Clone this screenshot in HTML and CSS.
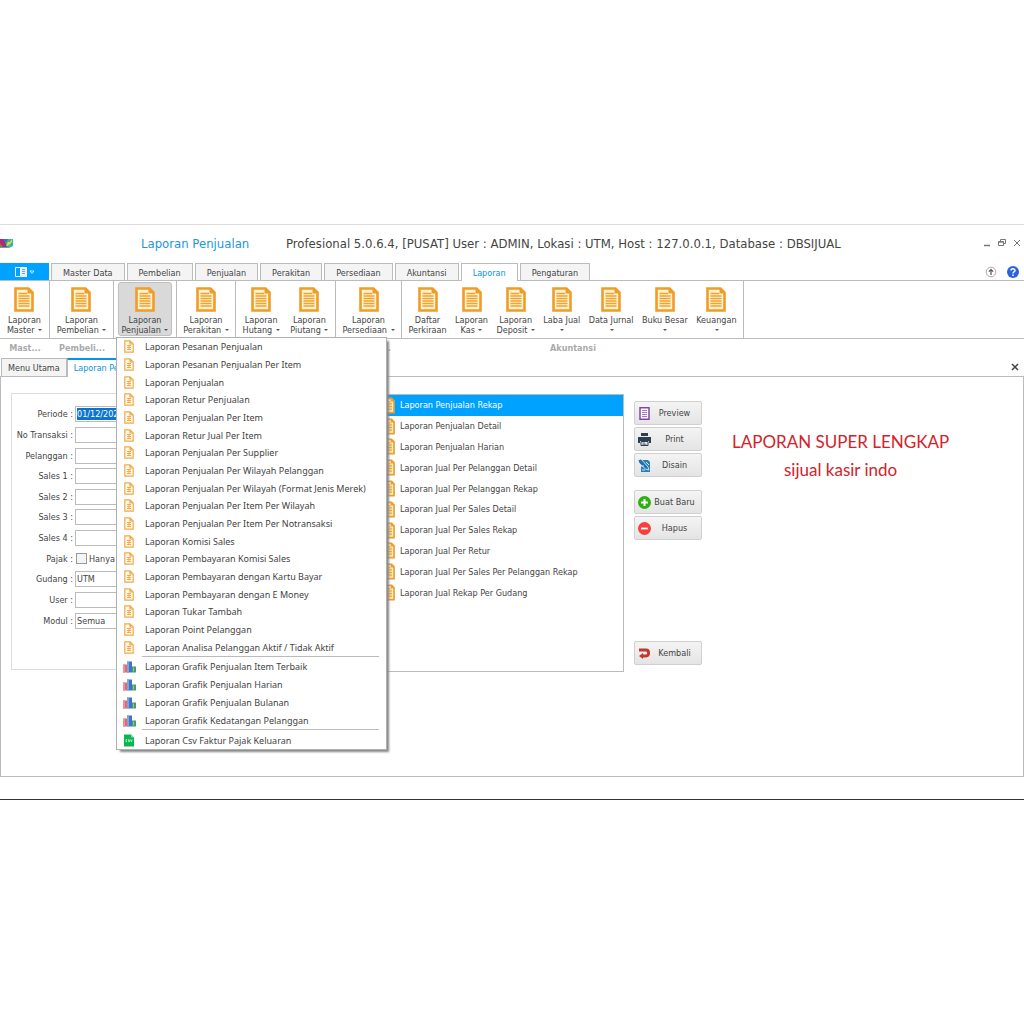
FILE: index.html
```html
<!DOCTYPE html>
<html lang="id">
<head>
  <meta charset="utf-8">
  <title>Laporan Penjualan</title>
  <link rel="stylesheet" href="styles.css">
</head>
<body>
  <!-- shared icons -->
  <svg class="sprite" aria-hidden="true">
    <symbol id="report" viewBox="0 0 20 25">
      <path d="M1.500 1.500H14.500L18.500 5.500V23.500H1.500Z" fill="#fff3d0" stroke="#f09c28" stroke-width="2.600"/>
      <path d="M13.500 1V6.500H19Z" fill="#f09c28"/>
      <path d="M4.500 6.500H13M4.500 9H15.500M4.500 11.500H15.500M4.500 14H15.500M4.500 16.500H15.500M4.500 19H15.500" stroke="#f4a22f" stroke-width="1.500"/>
    </symbol>
    <symbol id="page" viewBox="0 0 10 13">
      <path d="M.8 .8H6L9.200 4V12.200H.8Z M6 1V4H9" fill="#fffaf0" stroke="#f3a947" stroke-width="1.200"/>
      <path d="M3 5.500H7M3 7.500H7M3 9.500H7M5 5V10" stroke="#f3a947"/>
    </symbol>
    <symbol id="chart" viewBox="0 0 13 12">
      <path d="M0 4H4V12H0Z" fill="#e26a6c"/>
      <path d="M0 4H2V12H0Z" fill="#f09090"/>
      <path d="M4 1H9V12H4Z" fill="#3f74c6"/>
      <path d="M4 1H6V12H4Z" fill="#7ba6e6"/>
      <path d="M9 6H13V12H9Z" fill="#4c9a6c"/>
      <path d="M10 7H11V11H10Z" fill="#8cc8a0"/>
    </symbol>
  </svg>

  <div class="window">
    <header class="titlebar">
      <svg class="app-logo" viewBox="0 0 13 11"><path d="M0 1H13V8L9 10H0Z" fill="#3bb4a0"/><path d="M0 1H4L7 9H0Z" fill="#a0307c"/><path d="M4 1L6 5L8 1Z" fill="#3d6cc0"/><path d="M6 8L8 4H10L12 1V4L9 7Z" fill="#e4dc3c"/><path d="M0 5L3 9H0Z" fill="#e05540"/></svg>
      <span class="tool-title">Laporan Penjualan</span>
      <h1>Profesional 5.0.6.4, [PUSAT] User : ADMIN, Lokasi : UTM, Host : 127.0.0.1, Database : DBSIJUAL</h1>
      <div class="win-buttons">
        <button aria-label="Minimize"><svg viewBox="0 0 8 8"><path d="M1 6.500H7" stroke="#777" stroke-width="1.500"/></svg></button>
        <button aria-label="Restore"><svg viewBox="0 0 8 8"><path d="M2.500 2.500V.5H7.500V4.500H5.500M.5 2.500H5.500V6.500H.5Z M.5 3.200H5.500" fill="none" stroke="#777"/></svg></button>
        <button aria-label="Close"><svg viewBox="0 0 8 8"><path d="M1 1L7 7M7 1L1 7" stroke="#777"/></svg></button>
      </div>
    </header>

    <nav class="tabs">
      <button class="app-menu" aria-label="Menu">
        <svg viewBox="0 0 20 10"><path d="M.5 .5H5.500V9.500H.5Z" fill="none" stroke="#fff"/><path d="M6 0H12V10H6Z" fill="#eee"/><path d="M7 2.500H10M7 4.500H10M7 6.500H10" stroke="#69a9cc"/><path d="M15 4H19L17 6.500Z" fill="#0090e0" stroke="#fff" stroke-width=".8"/></svg>
      </button>
      <a href="#">Master Data</a>
      <a href="#">Pembelian</a>
      <a href="#">Penjualan</a>
      <a href="#">Perakitan</a>
      <a href="#">Persediaan</a>
      <a href="#">Akuntansi</a>
      <a href="#" class="active">Laporan</a>
      <a href="#">Pengaturan</a>
      <div class="tab-tools">
        <button aria-label="Collapse"><svg viewBox="0 0 12 12"><circle cx="6" cy="6" r="4.800" fill="#fff" stroke="#aaa"/><path d="M6 9V3.500M3.800 5.700L6 3.500L8.200 5.700" fill="none" stroke="#555" stroke-width="1.200"/></svg></button>
        <button aria-label="Help"><svg viewBox="0 0 12 12"><circle cx="6" cy="6" r="6" fill="#2a62dc"/><path d="M4 4.600C4 2.300 8 2.300 8 4.500C8 6 6 5.800 6 7.400M6 8.500V10" fill="none" stroke="#fff" stroke-width="1.500"/></svg></button>
      </div>
    </nav>

    <div class="ribbon">
      <section class="group g-master">
        <div class="tools"><button><svg><use href="#report"/></svg>Laporan<br>Master <i></i></button></div>
        <h2>Mast...</h2>
      </section>
      <section class="group g-beli">
        <div class="tools"><button><svg><use href="#report"/></svg>Laporan<br>Pembelian <i></i></button></div>
        <h2>Pembeli...</h2>
      </section>
      <section class="group g-jual">
        <div class="tools"><button class="open"><svg><use href="#report"/></svg>Laporan<br>Penjualan <i></i></button></div>
        <div class="menu">
          <ul class="reports">
            <li><a href="#"><svg><use href="#page"/></svg>Laporan Pesanan Penjualan</a></li>
            <li><a href="#"><svg><use href="#page"/></svg>Laporan Pesanan Penjualan Per Item</a></li>
            <li><a href="#"><svg><use href="#page"/></svg>Laporan Penjualan</a></li>
            <li><a href="#"><svg><use href="#page"/></svg>Laporan Retur Penjualan</a></li>
            <li><a href="#"><svg><use href="#page"/></svg>Laporan Penjualan Per Item</a></li>
            <li><a href="#"><svg><use href="#page"/></svg>Laporan Retur Jual Per Item</a></li>
            <li><a href="#"><svg><use href="#page"/></svg>Laporan Penjualan Per Supplier</a></li>
            <li><a href="#"><svg><use href="#page"/></svg>Laporan Penjualan Per Wilayah Pelanggan</a></li>
            <li><a href="#"><svg><use href="#page"/></svg>Laporan Penjualan Per Wilayah (Format Jenis Merek)</a></li>
            <li><a href="#"><svg><use href="#page"/></svg>Laporan Penjualan Per Item Per Wilayah</a></li>
            <li><a href="#"><svg><use href="#page"/></svg>Laporan Penjualan Per Item Per Notransaksi</a></li>
            <li><a href="#"><svg><use href="#page"/></svg>Laporan Komisi Sales</a></li>
            <li><a href="#"><svg><use href="#page"/></svg>Laporan Pembayaran Komisi Sales</a></li>
            <li><a href="#"><svg><use href="#page"/></svg>Laporan Pembayaran dengan Kartu Bayar</a></li>
            <li><a href="#"><svg><use href="#page"/></svg>Laporan Pembayaran dengan E Money</a></li>
            <li><a href="#"><svg><use href="#page"/></svg>Laporan Tukar Tambah</a></li>
            <li><a href="#"><svg><use href="#page"/></svg>Laporan Point Pelanggan</a></li>
            <li><a href="#"><svg><use href="#page"/></svg>Laporan Analisa Pelanggan Aktif / Tidak Aktif</a></li>
          </ul>
          <hr>
          <ul class="charts">
            <li><a href="#"><svg><use href="#chart"/></svg>Laporan Grafik Penjualan Item Terbaik</a></li>
            <li><a href="#"><svg><use href="#chart"/></svg>Laporan Grafik Penjualan Harian</a></li>
            <li><a href="#"><svg><use href="#chart"/></svg>Laporan Grafik Penjualan Bulanan</a></li>
            <li><a href="#"><svg><use href="#chart"/></svg>Laporan Grafik Kedatangan Pelanggan</a></li>
          </ul>
          <hr>
          <ul class="export">
            <li><a href="#"><svg viewBox="0 0 10 12"><path d="M0 0H7L10 3V12H0Z" fill="#08b74f"/><path d="M7 0V3H10Z" fill="#7fdca4"/><path d="M3 5.200H2V7.200H3M5.500 5.200H4.500V6.200H5.500V7.200H4.300M6.600 5L7.400 7.200L8.200 5" fill="none" stroke="#fff" stroke-width=".7"/></svg>Laporan Csv Faktur Pajak Keluaran</a></li>
          </ul>
        </div>
      </section>
      <section class="group g-rakit">
        <div class="tools"><button><svg><use href="#report"/></svg>Laporan<br>Perakitan <i></i></button></div>
      </section>
      <section class="group g-hutang">
        <div class="tools">
          <button><svg><use href="#report"/></svg>Laporan<br>Hutang <i></i></button>
          <button><svg><use href="#report"/></svg>Laporan<br>Piutang <i></i></button>
        </div>
      </section>
      <section class="group g-sedia">
        <div class="tools"><button><svg><use href="#report"/></svg>Laporan<br>Persediaan <i></i></button></div>
        <h2>Persedi...</h2>
      </section>
      <section class="group g-akun">
        <div class="tools">
          <button><svg><use href="#report"/></svg>Daftar<br>Perkiraan</button>
          <button><svg><use href="#report"/></svg>Laporan<br>Kas <i></i></button>
          <button><svg><use href="#report"/></svg>Laporan<br>Deposit <i></i></button>
          <button><svg><use href="#report"/></svg>Laba Jual<br><i></i></button>
          <button><svg><use href="#report"/></svg>Data Jurnal<br><i></i></button>
          <button><svg><use href="#report"/></svg>Buku Besar<br><i></i></button>
          <button><svg><use href="#report"/></svg>Keuangan<br><i></i></button>
        </div>
        <h2>Akuntansi</h2>
      </section>
      <div class="rest"></div>
    </div>

    <nav class="doc-tabs">
      <a href="#">Menu Utama</a>
      <a href="#" class="active">Laporan Penjualan</a>
      <button aria-label="Close tab"><svg viewBox="0 0 8 8"><path d="M1 1L7 7M7 1L1 7" stroke="#444" stroke-width="1.500"/></svg></button>
    </nav>

    <main>
      <form class="filter">
        <div class="fields">
          <label for="periode">Periode :</label><input type="text" id="periode" class="selected" value="01/12/2021">
          <label for="notrans">No Transaksi :</label><input type="text" id="notrans">
          <label for="pelanggan">Pelanggan :</label><input type="text" id="pelanggan">
          <label for="sales1">Sales 1 :</label><input type="text" id="sales1">
          <label for="sales2">Sales 2 :</label><input type="text" id="sales2">
          <label for="sales3">Sales 3 :</label><input type="text" id="sales3">
          <label for="sales4">Sales 4 :</label><input type="text" id="sales4">
          <span class="caption">Pajak :</span><label class="check"><input type="checkbox">Hanya</label>
          <label for="gudang">Gudang :</label><select id="gudang"><option>UTM</option></select>
          <label for="user">User :</label><input type="text" id="user">
          <label for="modul">Modul :</label><select id="modul"><option>Semua</option></select>
        </div>
      </form>

      <div class="list">
        <ul>
          <li class="current"><svg><use href="#report"/></svg>Laporan Penjualan Rekap</li>
          <li><svg><use href="#report"/></svg>Laporan Penjualan Detail</li>
          <li><svg><use href="#report"/></svg>Laporan Penjualan Harian</li>
          <li><svg><use href="#report"/></svg>Laporan Jual Per Pelanggan Detail</li>
          <li><svg><use href="#report"/></svg>Laporan Jual Per Pelanggan Rekap</li>
          <li><svg><use href="#report"/></svg>Laporan Jual Per Sales Detail</li>
          <li><svg><use href="#report"/></svg>Laporan Jual Per Sales Rekap</li>
          <li><svg><use href="#report"/></svg>Laporan Jual Per Retur</li>
          <li><svg><use href="#report"/></svg>Laporan Jual Per Sales Per Pelanggan Rekap</li>
          <li><svg><use href="#report"/></svg>Laporan Jual Rekap Per Gudang</li>
        </ul>
      </div>

      <div class="actions">
        <button><svg viewBox="0 0 13 13"><path d="M2 .8H11V12.200H2Z" fill="#fff" stroke="#8444a4" stroke-width="1.500"/><path d="M4 3.500H9M4 5.500H9M4 7.500H9M4 9.500H9" stroke="#a678bd"/></svg><span>Preview</span></button>
        <button><svg viewBox="0 0 13 13"><path d="M3 0H10V3H3Z M0 4H13V10H11V8H2V10H0Z" fill="#2c3e50"/><path d="M3 8.500H10V12.500H3Z" fill="#e8edf0" stroke="#2c3e50"/><path d="M4.500 10H7M4.500 11.300H8.500" stroke="#2c3e50" stroke-width=".7"/></svg><span>Print</span></button>
        <button><svg viewBox="0 0 13 13"><path d="M4 1H10L12 3V13H3V7Z" fill="#2980b9"/><path d="M0 1L3 0L10 8L11 11L7.500 10L1 4Z" fill="#2471a8" stroke="#e8f1f8" stroke-width=".8"/><path d="M3 7H6M4 11H7M8 3L11 6" stroke="#e8f1f8" stroke-width=".9"/></svg><span>Disain</span></button>
        <button class="spaced"><svg viewBox="0 0 13 13"><circle cx="6.500" cy="6.500" r="6.500" fill="#2db012"/><path d="M6.500 3V10M3 6.500H10" stroke="#fff" stroke-width="2"/></svg><span>Buat Baru</span></button>
        <button><svg viewBox="0 0 13 13"><circle cx="6.500" cy="6.500" r="6.500" fill="#fa3e3e"/><path d="M3 6.500H10" stroke="#fff" stroke-width="1.800"/></svg><span>Hapus</span></button>
        <button class="back"><svg viewBox="0 0 13 13"><path d="M1 3H8C11.500 3 11.500 9 8 9H4" fill="none" stroke="#c0392b" stroke-width="2.800"/><path d="M1 9L5 6V12Z" fill="#c0392b"/></svg><span>Kembali</span></button>
      </div>

      <p class="note">LAPORAN SUPER LENGKAP<br>sijual kasir indo</p>
    </main>

    <footer></footer>
  </div>
</body>
</html>
```

FILE: styles.css
```css
* {
  box-sizing: border-box;
}

body {
  margin: 0;
  min-height: 100vh;
  display: flex;
  align-items: center;
  background: #fff;
  color: #444;
  font-family: "DejaVu Sans Condensed", "DejaVu Sans", sans-serif;
  font-size: 9px;
}

button, input, select {
  font: inherit;
  color: inherit;
}

button {
  padding: 0;
  border: 0;
  background: none;
}

a {
  color: inherit;
  text-decoration: none;
}

ul {
  list-style: none;
  margin: 0;
  padding: 0;
}

svg {
  display: block;
  flex: none;
}

.sprite {
  position: absolute;
  width: 0;
  height: 0;
}

.window {
  width: 100%;
  border-top: 1px solid #ddd;
  border-bottom: 1px solid #333;
}

/* title bar */
.titlebar {
  display: flex;
  align-items: center;
  height: 38px;
  padding-bottom: 2px;
}

.app-logo {
  width: 13px;
  height: 11px;
}

.tool-title {
  width: 145px;
  margin-left: 128px;
  color: #1e96d8;
  font-size: 13px;
}

.titlebar h1 {
  margin: 0;
  font-size: 13px;
  font-weight: normal;
  white-space: nowrap;
}

.win-buttons {
  display: flex;
  gap: 7px;
  margin-left: auto;
  padding-right: 3px;
}

.win-buttons svg {
  width: 8px;
  height: 8px;
}

/* ribbon tabs */
.tabs {
  display: flex;
  gap: 2px;
  height: 18px;
  border-bottom: 1px solid #bbb;
}

.tabs a {
  height: 17px;
  padding: 0 11px;
  border: 1px solid #bbb;
  border-bottom: 0;
  background: #f4f4f4;
  line-height: 18px;
}

.tabs a.active {
  height: 18px;
  background: #fff;
  color: #0a94e0;
}

.app-menu {
  width: 49px;
  height: 17px;
  background: #00a2ff;
}

.app-menu svg {
  width: 20px;
  height: 10px;
  margin: 0 auto;
}

.tab-tools {
  display: flex;
  gap: 10px;
  align-items: center;
  margin-left: auto;
  padding-right: 5px;
}

.tab-tools svg {
  width: 12px;
  height: 12px;
}

/* ribbon */
.ribbon {
  display: flex;
}

.group {
  position: relative;
  flex: none;
}

.g-master { width: 50px; }
.g-beli { width: 64px; }
.g-jual { width: 63px; }
.g-rakit { width: 59px; }
.g-hutang { width: 100px; }
.g-sedia { width: 66px; }
.g-akun { width: 342px; }

.tools {
  display: flex;
  justify-content: space-evenly;
  height: 58px;
  padding: 1px 0 2px;
  border-right: 1px solid #bbb;
  border-bottom: 1px solid #bbb;
}

.tools button {
  display: flow-root;
  padding: 3px 3px 0;
  border: 1px solid transparent;
  border-radius: 3px;
  line-height: 10px;
  white-space: nowrap;
}

.g-akun button {
  padding: 3px 1px 0;
}

.tools button.open {
  border-color: #c0c0c0;
  background: #d9d9d9;
}

.tools svg {
  width: 20px;
  height: 25px;
  margin: 0 auto 3px;
}

.tools i {
  display: inline-block;
  margin-left: 1px;
  border: 2px solid transparent;
  border-top-color: #555;
  border-bottom: 0;
  vertical-align: 2px;
}

.group h2 {
  height: 19px;
  margin: 0;
  color: #aaa;
  font-size: 9px;
  line-height: 18px;
  text-align: center;
  white-space: nowrap;
}

.rest {
  flex: 1;
  height: 58px;
  border-bottom: 1px solid #bbb;
}

/* drop-down menu */
.menu {
  position: absolute;
  z-index: 2;
  top: 56px;
  left: 2px;
  width: 271px;
  border: 1px solid #b0b0b0;
  background: #fff;
  box-shadow: 3px 3px 2px -1px #888;
  font-family: "Noto Sans", "Open Sans", sans-serif;
  font-size: 9px;
}

.menu ul {
  display: grid;
  grid-auto-rows: 1fr;
}

.reports { height: 318px; }
.charts { height: 71px; }
.export { height: 18px; }

.menu a {
  display: grid;
  grid-template-columns: 24px 1fr;
  gap: 4px;
  align-items: center;
  height: 100%;
  white-space: nowrap;
}

.menu svg {
  width: 10px;
  height: 13px;
  justify-self: center;
}

.menu .charts svg {
  width: 13px;
}

.menu hr {
  height: 1px;
  margin: 0 7px 1px 25px;
  border: 0;
  background: #bbb;
}

/* document tabs */
.doc-tabs {
  display: flex;
  height: 19px;
  border-bottom: 1px solid #bbb;
}

.doc-tabs a {
  height: 18px;
  padding: 0 6px;
  border: 1px solid #bbb;
  border-bottom: 0;
  background: #f4f4f4;
  line-height: 18px;
}

.doc-tabs a:first-child {
  margin-left: 1px;
}

.doc-tabs a.active {
  height: 19px;
  border-top: 2px solid #0a94e0;
  background: #fff;
  color: #0a94e0;
  line-height: 16px;
}

.doc-tabs button {
  margin-left: auto;
  padding-right: 5px;
}

.doc-tabs svg {
  width: 8px;
  height: 8px;
}

/* content */
main {
  display: flex;
  align-items: flex-start;
  min-height: 400px;
  padding: 16px 0 0 10px;
  border: 1px solid #bbb;
  border-top: 0;
}

.filter {
  width: 350px;
  height: 277px;
  padding: 10px 8px 0 3px;
  border: 1px solid #ddd;
}

.fields {
  display: grid;
  grid-template-columns: 58px 1fr;
  grid-auto-rows: 1fr;
  column-gap: 2px;
  align-items: center;
  height: 227px;
}

.fields > label, .caption {
  text-align: right;
  white-space: nowrap;
}

.fields > input, .fields select {
  width: 100%;
  height: 16px;
  padding: 1px;
  border: 1px solid #bbb;
  border-radius: 0;
  background: #fff;
  appearance: none;
}

.fields > .selected {
  padding: 1px;
  background: #0a74d0 content-box;
  color: #fff;
}

.fields > .check {
  display: flex;
  gap: 2px;
  align-items: center;
  text-align: left;
}

.check input {
  width: 11px;
  height: 11px;
  margin: 0 0 0 1px;
  border: 1px solid #999;
  background: #f4f4f4;
  appearance: none;
}

.list {
  width: 248px;
  height: 278px;
  margin: 1px 0 0 15px;
  border: 1px solid #bbb;
}

.list ul {
  display: grid;
  grid-auto-rows: 1fr;
  height: 208px;
}

.list li {
  display: flex;
  gap: 5px;
  align-items: center;
  padding-left: 5px;
  white-space: nowrap;
}

.list li.current {
  background: #00a2ff;
  color: #fff;
}

.list svg {
  width: 13px;
  height: 17px;
}

.actions {
  display: flex;
  flex-direction: column;
  gap: 2px;
  width: 68px;
  margin: 8px 0 0 10px;
}

.actions button {
  display: flex;
  align-items: center;
  height: 24px;
  padding: 0 3px;
  border: 1px solid #d0d0d0;
  border-radius: 2px;
  background: linear-gradient(#f4f4f4, #e4e4e4);
}

.actions svg {
  width: 13px;
  height: 13px;
}

.actions span {
  flex: 1;
  text-align: center;
}

.actions .spaced {
  margin-top: 11px;
}

.actions .back {
  margin-top: 99px;
}

.note {
  margin: 35px 0 0 30px;
  color: #d4222a;
  font-family: Lato, sans-serif;
  font-size: 17px;
  line-height: 28px;
  text-align: center;
}

footer {
  height: 22px;
}
```
